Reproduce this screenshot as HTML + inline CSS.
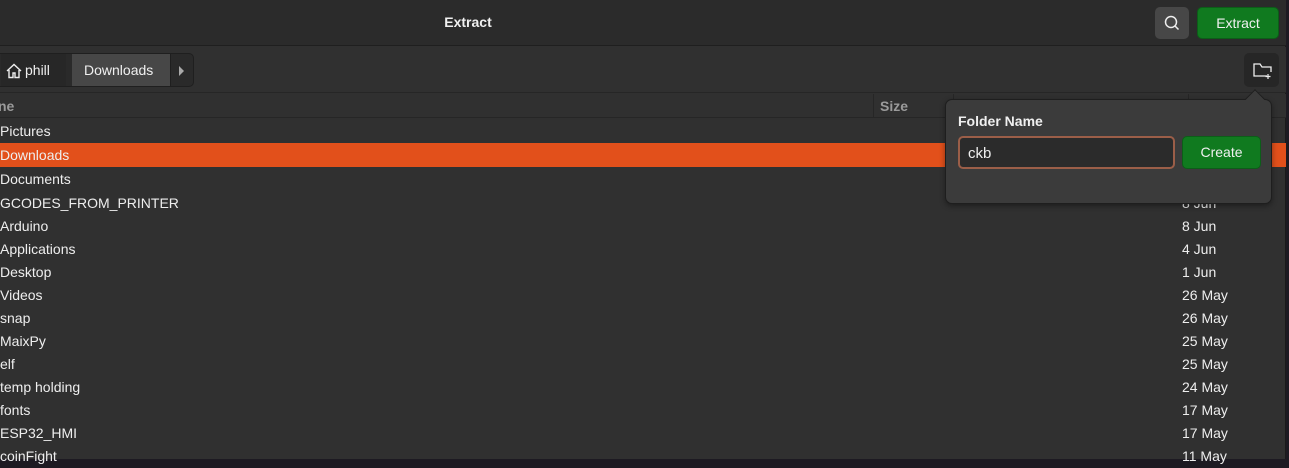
<!DOCTYPE html>
<html><head><style>
*{margin:0;padding:0;box-sizing:border-box}
body{width:1289px;height:459px;background:#1d1a22;font-family:"Liberation Sans","DejaVu Sans",sans-serif;color:#f0f0f0;font-size:14px;overflow:hidden;position:relative}
.win{position:absolute;left:0;top:0;width:1286px;height:459px;background:#303030;border-right:1px solid #1a1a1a}
.hdr{position:absolute;left:0;top:0;width:1286px;height:46px;background:#2b2b2b;border-bottom:1px solid #1f1f1f}
.title{position:absolute;left:0;width:936px;top:14px;text-align:center;font-weight:bold;font-size:14px}
.btn{position:absolute;border-radius:5px}
.tb{position:absolute;top:47px;left:0;width:1286px;height:46px;background:#303030;border-bottom:1px solid #262626}
.colh{position:absolute;top:94px;left:0;width:1286px;height:24px;background:#303030;border-bottom:1px solid #262626;color:#9a9a9a;font-weight:bold;font-size:14px}
.row{position:absolute;left:0;width:1286px;height:24px;line-height:24px;font-size:14px;color:#eee}
.row span{position:absolute;left:1182px}
.sel{background:#e2501b}
</style></head><body>
<div class="win">
<div class="hdr">
 <div class="title">Extract</div>
 <div class="btn" style="left:1155px;top:7px;width:34px;height:32px;background:#474747">
  <svg width="34" height="32"><circle cx="16" cy="15" r="5.5" fill="none" stroke="#eee" stroke-width="1.5"/><line x1="20" y1="19" x2="23.5" y2="22.5" stroke="#eee" stroke-width="1.5"/></svg>
 </div>
 <div class="btn" style="left:1197px;top:7px;width:82px;height:32px;background:#107a1f;border:1px solid #0c5e18;text-align:center;line-height:30px;font-size:14px">Extract</div>
</div>
<div class="tb">
 <div style="position:absolute;left:-6px;top:6px;width:200px;height:34px;border:1px solid #1f1f1f;border-radius:5px;background:#2a2a2a;overflow:hidden">
  <div style="position:absolute;left:6px;top:0;width:65px;height:34px;background:#272727">
   <svg style="position:absolute;left:4px;top:8px" width="18" height="18"><path d="M2 9 L9 2.5 L16 9 M4 8 V15.5 H8 V11 H10 V15.5 H14 V8" fill="none" stroke="#eee" stroke-width="1.4"/></svg>
   <span style="position:absolute;left:24px;top:8px">phill</span>
  </div>
  <div style="position:absolute;left:77px;top:0;width:99px;height:34px;background:#474747;border-right:1px solid #1f1f1f"><span style="position:absolute;left:12px;top:8px">Downloads</span></div>
  <svg style="position:absolute;left:183px;top:11px" width="8" height="12"><path d="M1 1 L6 6 L1 11Z" fill="#aaa"/></svg>
 </div>
 <div class="btn" style="left:1244px;top:6px;width:35px;height:34px;background:#262626">
  <svg width="35" height="34"><path d="M10 12 V23 H23 M27 19 V14 H18 L16 11 H10 V12" fill="none" stroke="#eee" stroke-width="1.3"/><path d="M24 21 V26 M21.5 23.5 H26.5" stroke="#eee" stroke-width="1.2"/></svg>
 </div>
</div>
<div class="colh">
 <span style="position:absolute;left:-2px;top:4px">ne</span>
 <div style="position:absolute;left:873px;top:0;height:24px;border-left:1px solid #262626"></div>
 <span style="position:absolute;left:880px;top:4px">Size</span>
 <div style="position:absolute;left:953px;top:0;height:24px;border-left:1px solid #262626"></div>
 <div style="position:absolute;left:1188px;top:0;height:24px;border-left:1px solid #262626"></div>
</div>
<div class="row" style="top:119px">Pictures</div>
<div class="row sel" style="top:143px">Downloads</div>
<div class="row" style="top:167px">Documents</div>
<div class="row" style="top:191px">GCODES_FROM_PRINTER<span>8 Jun</span></div>
<div class="row" style="top:214px">Arduino<span>8 Jun</span></div>
<div class="row" style="top:237px">Applications<span>4 Jun</span></div>
<div class="row" style="top:260px">Desktop<span>1 Jun</span></div>
<div class="row" style="top:283px">Videos<span>26 May</span></div>
<div class="row" style="top:306px">snap<span>26 May</span></div>
<div class="row" style="top:329px">MaixPy<span>25 May</span></div>
<div class="row" style="top:352px">elf<span>25 May</span></div>
<div class="row" style="top:375px">temp holding<span>24 May</span></div>
<div class="row" style="top:398px">fonts<span>17 May</span></div>
<div class="row" style="top:421px">ESP32_HMI<span>17 May</span></div>
<div class="row" style="top:444px">coinFight<span>11 May</span></div>
<div style="position:absolute;left:945px;top:99px;width:327px;height:105px;background:#3b3b3b;border:1px solid #1e1e1e;border-radius:7px;box-shadow:0 2px 6px rgba(0,0,0,.4)">
 <div style="position:absolute;left:302px;top:-8px;width:14px;height:14px;background:#3b3b3b;transform:rotate(45deg);border-left:1px solid #1e1e1e;border-top:1px solid #1e1e1e"></div>
 <div style="position:absolute;left:12px;top:13px;font-weight:bold;font-size:14px">Folder Name</div>
 <div style="position:absolute;left:12px;top:36px;width:217px;height:33px;background:#2b2b2b;border:2px solid #9b5e48;border-radius:5px;padding:7px 8px;font-size:15px">ckb</div>
 <div style="position:absolute;left:236px;top:36px;width:79px;height:33px;background:#107a1f;border:1px solid #0c5e18;border-radius:5px;text-align:center;line-height:31px">Create</div>
</div>
</div>
</body></html>
